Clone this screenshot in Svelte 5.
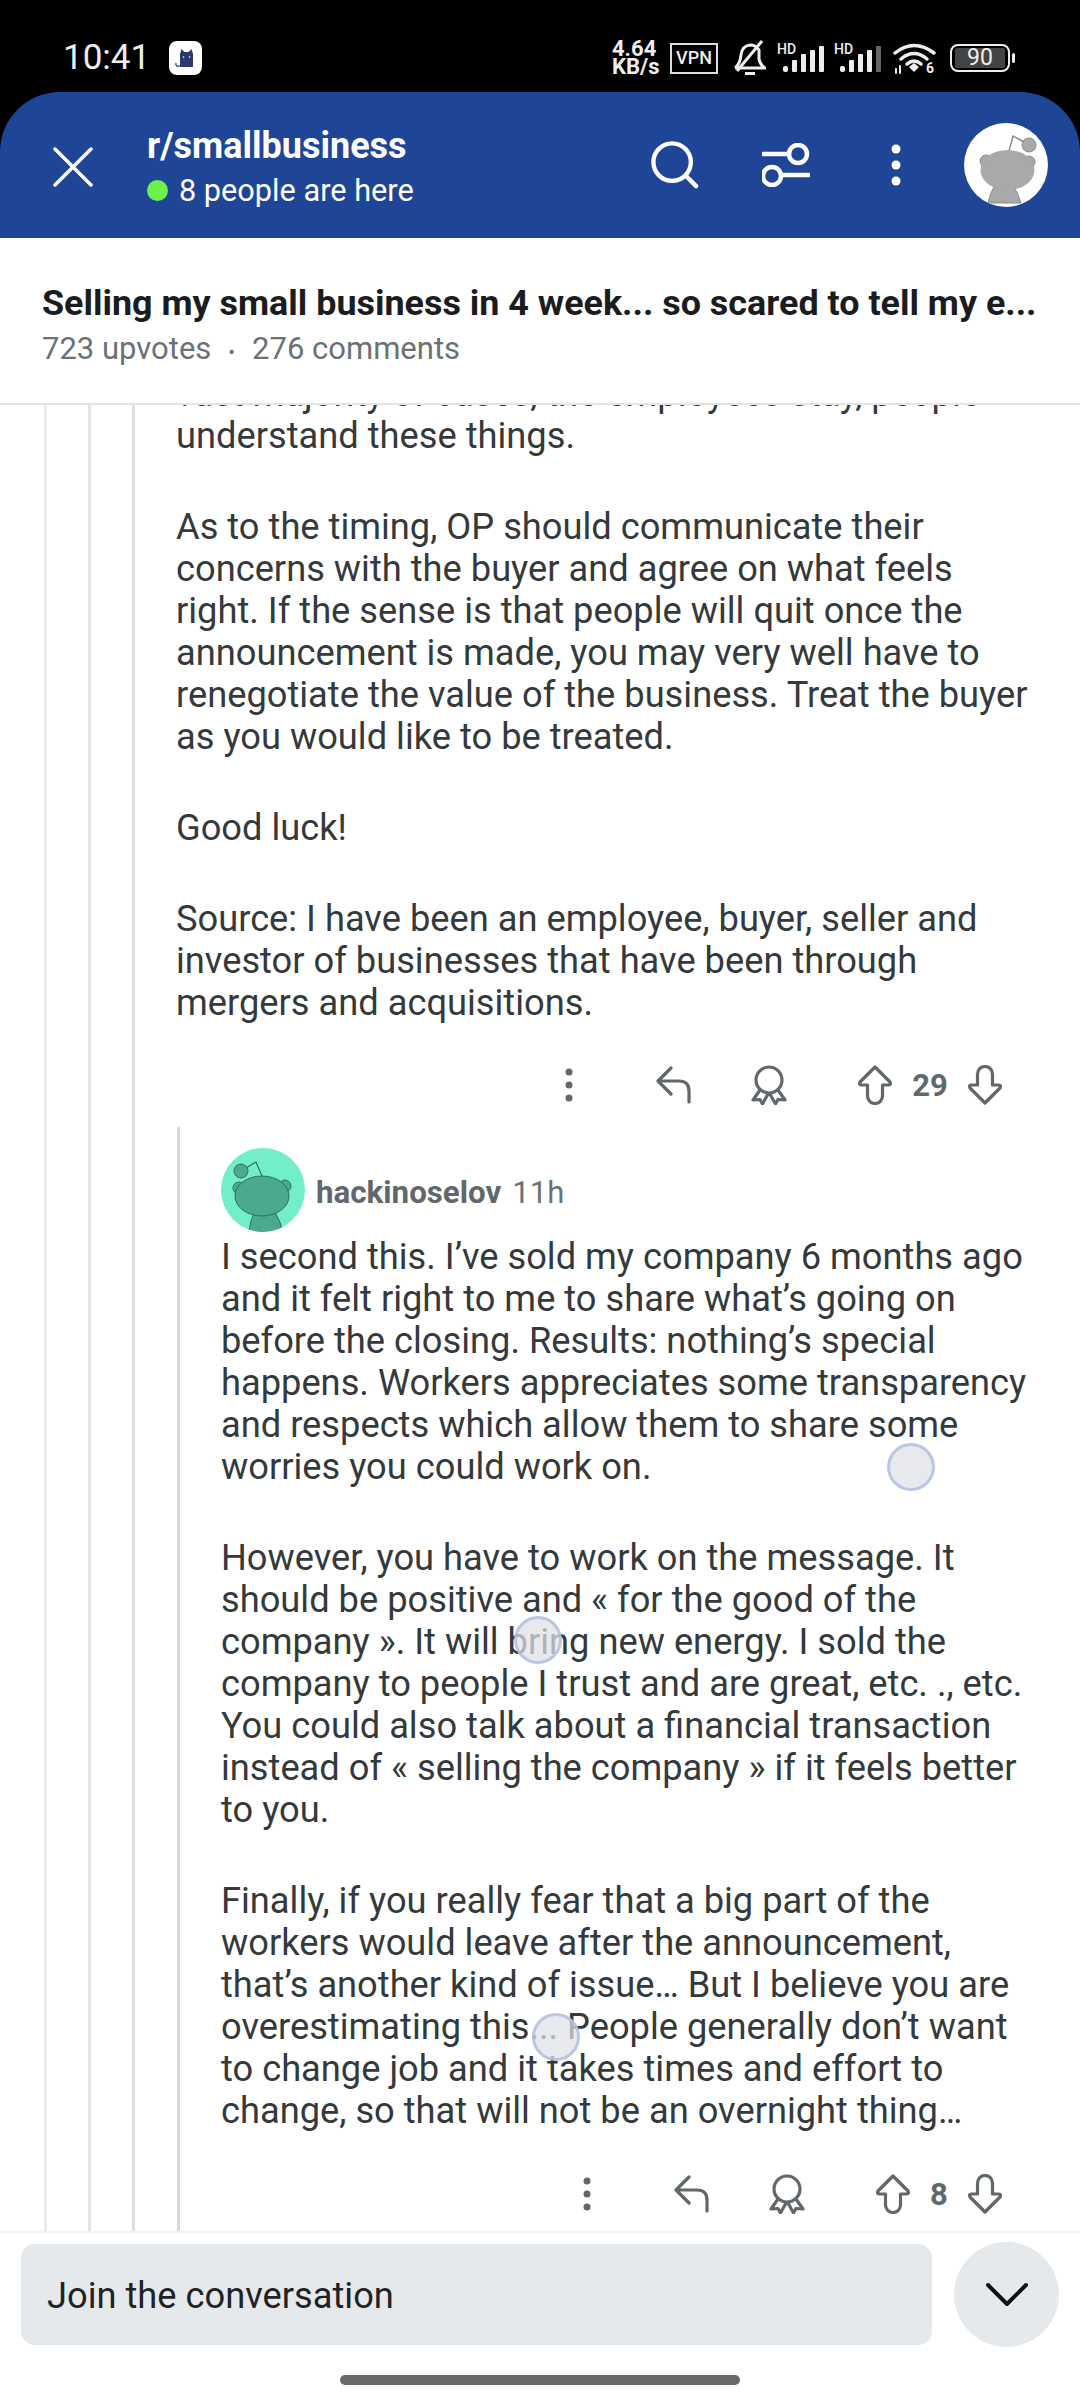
<script>
  const firstComment = [
    'vast majority of cases, the employees stay, people understand these things.',
    'As to the timing, OP should communicate their concerns with the buyer and agree on what feels right. If the sense is that people will quit once the announcement is made, you may very well have to renegotiate the value of the business. Treat the buyer as you would like to be treated.',
    'Good luck!',
    'Source: I have been an employee, buyer, seller and investor of businesses that have been through mergers and acquisitions.'
  ];

  const secondComment = [
    'I second this. I’ve sold my company 6 months ago and it felt right to me to share what’s going on before the closing. Results: nothing’s special happens. Workers appreciates some transparency and respects which allow them to share some worries you could work on.',
    'However, you have to work on the message. It should be positive and « for the good of the company ». It will bring new energy. I sold the company to people I trust and are great, etc. ., etc. You could also talk about a financial transaction instead of « selling the company » if it feels better to you.',
    'Finally, if you really fear that a big part of the workers would leave after the announcement, that’s another kind of issue… But I believe you are overestimating this... People generally don’t want to change job and it takes times and effort to change, so that will not be an overnight thing…'
  ];

  // touch indicators left on the recording
  const touches = [
    { x: 911, y: 1467 },
    { x: 538, y: 1640 },
    { x: 556, y: 2037 }
  ];
</script>

{#snippet signal(lastBar)}
  <div class="signal">
    <span class="hd">HD</span>
    <svg width="47" height="28" viewBox="0 0 47 28">
      <rect x="6" y="22" width="5" height="6" rx="2" fill="#eee" />
      <rect x="15" y="16" width="5" height="12" rx="1" fill="#eee" />
      <rect x="24" y="10" width="5" height="18" rx="1" fill="#eee" />
      <rect x="33" y="6" width="5" height="22" rx="1" fill="#eee" />
      <rect x="42" y="2" width="5" height="26" rx="1" fill={lastBar} />
    </svg>
  </div>
{/snippet}

{#snippet actions(count, variant)}
  <div class="actions {variant}">
    <svg class="dots" width="12" height="36" viewBox="0 0 12 36">
      <circle cx="6" cy="5" r="3.500" />
      <circle cx="6" cy="18" r="3.500" />
      <circle cx="6" cy="31" r="3.500" />
    </svg>
    <svg class="reply" width="36" height="38" viewBox="0 0 36 38">
      <path d="M15 2 L2 15 L15 28 M2 15 H23 Q33 15 33 25 V36" />
    </svg>
    <svg class="award" width="36" height="40" viewBox="0 0 36 40">
      <circle cx="18" cy="15" r="13" />
      <path d="M9 25 L2 35 L9 34.500 L11.500 39 L17 29 M27 25 L34 35 L27 34.500 L24.500 39 L19 29" />
    </svg>
    <div class="votes">
      <svg width="36" height="40" viewBox="0 0 36 40">
        <path d="M18 2 L33 17 Q34.500 20 31 20 H25.500 V31 a7.500 7.500 0 0 1 -15 0 V20 H5 Q1.500 20 3 17 Z" />
      </svg>
      <span class="count">{count}</span>
      <svg width="36" height="40" viewBox="0 0 36 40">
        <path d="M18 38 L33 23 Q34.500 20 31 20 H25.500 V9 a7.500 7.500 0 0 0 -15 0 V20 H5 Q1.500 20 3 23 Z" />
      </svg>
    </div>
  </div>
{/snippet}

<div class="screen">
  <div class="statusbar">
    <div class="status-left">
      <span class="time">10:41</span>
      <span class="app-badge">
        <svg width="24" height="24" viewBox="0 0 24 24">
          <path d="M6 21 V8 L7.500 3 L10.500 6 H14.500 L17.500 3 L19 8 V21 Z" fill="#2b3a6e" />
          <path d="M6 20 Q1 21 2 17" fill="none" stroke="#2b3a6e" stroke-width="1.200" />
          <circle cx="9.500" cy="11" r="0.800" fill="#fff" />
          <circle cx="15.500" cy="11" r="0.800" fill="#fff" />
        </svg>
      </span>
    </div>
    <div class="status-right">
      <div class="speed"><span>4.64</span><span>KB/s</span></div>
      <span class="vpn">VPN</span>
      <svg class="bell" width="32" height="36" viewBox="0 0 32 36" fill="none" stroke="#eee" stroke-width="3">
        <path d="M1 28 Q6 24 7 15 Q8 6 16 5 Q22 5 25 10 L25 19 Q26 25 31 28 H1" />
        <path d="M28 1 L3 31" />
        <path d="M11 33.500 H21" />
      </svg>
      {@render signal('#eee')}
      {@render signal('#666')}
      <svg class="wifi" width="43" height="31" viewBox="0 0 43 31" fill="none" stroke="#eee" stroke-width="3.500" stroke-linecap="round">
        <path d="M2 10 Q21 -5 41 10" />
        <path d="M8 16 Q21 5 34 16" />
        <path d="M14 21 Q21 15 28 21" />
        <path d="M16 24 L21 20 L26 24 L21 29 Z" fill="#eee" stroke="none" />
        <path d="M3 26 V30 M7 23 V30" stroke-width="2" />
        <text x="33" y="30" font-size="14" font-weight="700" fill="#eee" stroke="none" font-family="Roboto, sans-serif">6</text>
      </svg>
      <div class="battery"><span class="level">90</span></div>
      <span class="nub"></span>
    </div>
  </div>

  <header class="appbar">
    <svg class="close" width="40" height="40" viewBox="0 0 40 40">
      <path d="M2 2 L38 38 M38 2 L2 38" />
    </svg>
    <div class="sub-info">
      <div class="sub-name">r/smallbusiness</div>
      <div class="sub-online"><span class="dot"></span>8 people are here</div>
    </div>
    <svg class="bar-icon search" width="48" height="48" viewBox="0 0 50 50">
      <circle cx="22" cy="22" r="19.500" />
      <path d="M36 36 L47 47" />
    </svg>
    <svg class="bar-icon filter" width="48" height="44" viewBox="0 0 48 44">
      <circle cx="36" cy="11" r="9" />
      <path d="M1 11 H26" />
      <circle cx="10" cy="33" r="9" />
      <path d="M20 32 H47" />
    </svg>
    <svg class="bar-dots" width="12" height="44" viewBox="0 0 12 44">
      <circle cx="6" cy="6" r="4.500" />
      <circle cx="6" cy="22" r="4.500" />
      <circle cx="6" cy="38" r="4.500" />
    </svg>
    <div class="avatar-wrap">
      <svg width="84" height="84" viewBox="0 0 84 84">
        <defs>
          <clipPath id="bar-avatar"><circle cx="42" cy="42" r="42" /></clipPath>
        </defs>
        <circle cx="42" cy="42" r="42" fill="#fff" />
        <g clip-path="url(#bar-avatar)" fill="#a9a9a9" stroke="#8a8a8a" stroke-width="1">
          <path d="M45 28 L49 13 L60 19" fill="none" stroke-width="1.500" />
          <circle cx="65" cy="22" r="7" />
          <path d="M24 80 Q26 70 30 64 H50 Q54 70 57 80 Z" />
          <circle cx="22" cy="38" r="6" />
          <circle cx="65" cy="39" r="6" />
          <ellipse cx="43.500" cy="47" rx="27" ry="20" stroke="none" />
        </g>
      </svg>
    </div>
  </header>

  <div class="post-head">
    <div class="post-title">Selling my small business in 4 week... so scared to tell my e...</div>
    <div class="post-meta">723 upvotes<span class="sep">•</span>276 comments</div>
  </div>

  <main class="comments">
    <div class="thread t1">
      <div class="thread t2">
        <div class="thread t3">
          <div class="body first">
            {#each firstComment as para}
              <p>{para}</p>
            {/each}
          </div>
          {@render actions(29, 'row-a')}

          <div class="thread t4">
            <div class="author">
              <svg width="84" height="84" viewBox="0 0 84 84">
                <defs>
                  <clipPath id="teal-avatar"><circle cx="42" cy="42" r="42" /></clipPath>
                </defs>
                <circle cx="42" cy="42" r="42" fill="#72eec8" />
                <g clip-path="url(#teal-avatar)" fill="#4aa98e" stroke="#2f6f5e" stroke-width="1">
                  <path d="M41 28 L35 14 L25 20" fill="none" stroke-width="1.200" />
                  <circle cx="20" cy="23" r="7" />
                  <path d="M28 86 Q29 72 33 66 H55 Q60 74 62 86 Z" />
                  <circle cx="18" cy="40" r="6" />
                  <circle cx="64" cy="38" r="6" />
                  <ellipse cx="41" cy="48" rx="27" ry="20" />
                </g>
              </svg>
              <span class="username">hackinoselov</span>
              <span class="age">11h</span>
            </div>
            <div class="body">
              {#each secondComment as para}
                <p>{para}</p>
              {/each}
            </div>
            {@render actions(8, 'row-b')}
          </div>
        </div>
      </div>
    </div>
  </main>

  <footer class="composer">
    <div class="composer-row">
      <div class="input">Join the conversation</div>
      <div class="next">
        <svg width="42" height="26" viewBox="0 0 42 26">
          <path d="M2 3 L21 22 L40 3" />
        </svg>
      </div>
    </div>
    <div class="home-bar"></div>
  </footer>

  {#each touches as t}
    <span class="touch" style="left: {t.x}px; top: {t.y}px"></span>
  {/each}
</div>

<style>
  :global(body) {
    margin: 0;
    background: #fff;
  }

  .screen {
    position: relative;
    width: 1080px;
    height: 2400px;
    display: flex;
    flex-direction: column;
    overflow: hidden;
    background: #000;
    font-family: Roboto, "Liberation Sans", sans-serif;
  }

  /* status bar */
  .statusbar {
    height: 92px;
    flex: none;
    display: flex;
    align-items: center;
    justify-content: space-between;
    padding: 24px 65px 0 63px;
    box-sizing: border-box;
    color: #eee;
  }

  .status-left {
    display: flex;
    align-items: center;
    gap: 19px;
  }

  .time {
    font-size: 35px;
    line-height: 40px;
  }

  .app-badge {
    width: 33px;
    height: 34px;
    border-radius: 8px;
    background: #fff;
    display: flex;
    align-items: center;
    justify-content: center;
  }

  .status-right {
    display: flex;
    align-items: center;
  }

  .status-right > * {
    flex: none;
  }

  .speed {
    display: flex;
    flex-direction: column;
    font-size: 22px;
    font-weight: 700;
    line-height: 18px;
    width: 58px;
  }

  .vpn {
    width: 48px;
    height: 31px;
    box-sizing: border-box;
    border: 2.500px solid #ddd;
    font-size: 18px;
    font-weight: 500;
    line-height: 26px;
    text-align: center;
  }

  .bell {
    margin-left: 16px;
  }

  .signal {
    position: relative;
    margin-left: 11px;
    width: 47px;
    height: 28px;
    display: flex;
    align-items: flex-end;
  }

  .signal + .signal {
    margin-left: 10px;
  }

  .hd {
    position: absolute;
    left: 0;
    top: -2px;
    font-size: 14px;
    line-height: 14px;
    font-weight: 500;
  }

  .wifi {
    margin-left: 12px;
  }

  .battery {
    margin-left: 14px;
    width: 60px;
    height: 28px;
    box-sizing: border-box;
    border: 2.500px solid #eee;
    border-radius: 8px;
    padding: 2px 3px;
    display: flex;
  }

  .level {
    flex: 1;
    background: #444;
    border-radius: 2px;
    font-size: 23px;
    line-height: 19px;
    text-align: center;
  }

  .nub {
    width: 3px;
    height: 10px;
    margin-left: 2px;
    border-radius: 2px;
    background: #eee;
  }

  /* app bar */
  .appbar {
    height: 146px;
    flex: none;
    display: flex;
    align-items: center;
    padding: 0 32px 0 53px;
    box-sizing: border-box;
    background: #1f4596;
    border-radius: 60px 60px 0 0;
    color: #fff;
  }

  .close {
    flex: none;
    margin-top: 3px;
  }

  .close path {
    fill: none;
    stroke: #fff;
    stroke-width: 3.500;
    stroke-linecap: round;
  }

  .sub-info {
    flex: 1;
    margin-left: 54px;
    margin-top: 6px;
  }

  .sub-name {
    font-size: 36px;
    font-weight: 700;
    line-height: 40px;
  }

  .sub-online {
    display: flex;
    align-items: center;
    font-size: 30.700px;
    line-height: 40px;
    margin-top: 5px;
  }

  .dot {
    width: 21px;
    height: 21px;
    margin-right: 11px;
    border-radius: 50%;
    background: #6ef04c;
  }

  .bar-icon circle,
  .bar-icon path {
    fill: none;
    stroke: #fff;
    stroke-width: 4.500;
    stroke-linecap: round;
  }

  .search {
    margin-right: 63px;
  }

  .filter {
    margin-right: 80px;
  }

  .bar-dots {
    margin-right: 62px;
    fill: #fff;
  }

  .avatar-wrap {
    width: 84px;
    height: 84px;
  }

  /* post header */
  .post-head {
    height: 167px;
    flex: none;
    box-sizing: border-box;
    padding: 43px 42px 0;
    background: #fff;
    border-bottom: 2px solid #e4e4e4;
  }

  .post-title {
    font-size: 35.900px;
    font-weight: 700;
    line-height: 44px;
    color: #1a1c1e;
    white-space: nowrap;
  }

  .post-meta {
    margin-top: 4px;
    font-size: 31px;
    line-height: 40px;
    color: #6b7175;
  }

  .sep {
    margin: 0 17px;
    font-size: 20px;
  }

  /* comments */
  .comments {
    flex: 1;
    min-height: 0;
    overflow: hidden;
    background: #fff;
  }

  .thread {
    box-sizing: border-box;
    border-left: 3px solid #e2e2e2;
    padding-left: 41px;
  }

  .t1 {
    margin-left: 44px;
    border-left-color: #ebebeb;
  }

  .t2 {
    border-left-color: #e5e5e5;
  }

  .t3 {
    border-left-color: #dfdfdf;
  }

  .t4 {
    margin-top: 22px;
    margin-left: 1px;
    padding-bottom: 40px;
    border-left-color: #d8d8d8;
  }

  .body {
    color: #34393c;
    font-size: 36.250px;
    line-height: 42px;
    padding-right: 46px;
  }

  .first {
    margin-top: -32px;
  }

  .body p {
    margin: 0 0 49px;
  }

  .body p:last-child {
    margin-bottom: 0;
  }

  .actions {
    display: flex;
    align-items: center;
    justify-content: flex-end;
    height: 40px;
    margin-right: 77px;
  }

  .actions svg {
    flex: none;
  }

  .actions path,
  .actions circle {
    fill: none;
    stroke: #61676b;
    stroke-width: 3.200;
    stroke-linecap: round;
    stroke-linejoin: round;
  }

  .actions .dots circle {
    fill: #61676b;
    stroke: none;
  }

  .row-a {
    margin-top: 41px;
  }

  .row-b {
    margin-top: 42px;
  }

  .reply {
    margin-left: 81px;
  }

  .award {
    margin-left: 59px;
  }

  .votes {
    display: flex;
    align-items: center;
    justify-content: space-between;
    margin-left: 70px;
  }

  .row-a .votes {
    width: 146px;
  }

  .row-b .votes {
    width: 128px;
  }

  .count {
    font-size: 31px;
    font-weight: 700;
    color: #61676b;
  }

  .author {
    display: flex;
    align-items: center;
    padding-top: 21px;
    height: 84px;
    margin-bottom: 4px;
    box-sizing: content-box;
  }

  .username {
    margin-left: 11px;
    margin-top: 4px;
    font-size: 31.300px;
    font-weight: 700;
    color: #61676b;
  }

  .age {
    margin-left: 11px;
    margin-top: 4px;
    font-size: 31px;
    color: #6b7175;
  }

  /* composer */
  .composer {
    height: 169px;
    flex: none;
    box-sizing: border-box;
    background: #fff;
    border-top: 2px solid #f2f2f2;
    padding: 9px 21px 0;
  }

  .composer-row {
    display: flex;
    align-items: center;
    gap: 22px;
  }

  .input {
    flex: 1;
    height: 101px;
    box-sizing: border-box;
    padding-left: 26px;
    border-radius: 14px;
    background: #e6e9eb;
    color: #1f2326;
    font-size: 36.250px;
    line-height: 103px;
  }

  .next {
    width: 105px;
    height: 105px;
    border-radius: 50%;
    background: #e6e9eb;
    display: flex;
    align-items: center;
    justify-content: center;
  }

  .next path {
    fill: none;
    stroke: #111;
    stroke-width: 4;
    stroke-linecap: round;
    stroke-linejoin: round;
  }

  .home-bar {
    width: 400px;
    height: 10px;
    margin: 28px auto 0;
    border-radius: 5px;
    background: #6a6a6a;
  }

  .touch {
    position: absolute;
    width: 48px;
    height: 48px;
    margin: -24px 0 0 -24px;
    box-sizing: border-box;
    border: 3px solid rgba(172, 186, 222, 0.75);
    border-radius: 50%;
    background: rgba(222, 224, 228, 0.72);
  }
</style>
